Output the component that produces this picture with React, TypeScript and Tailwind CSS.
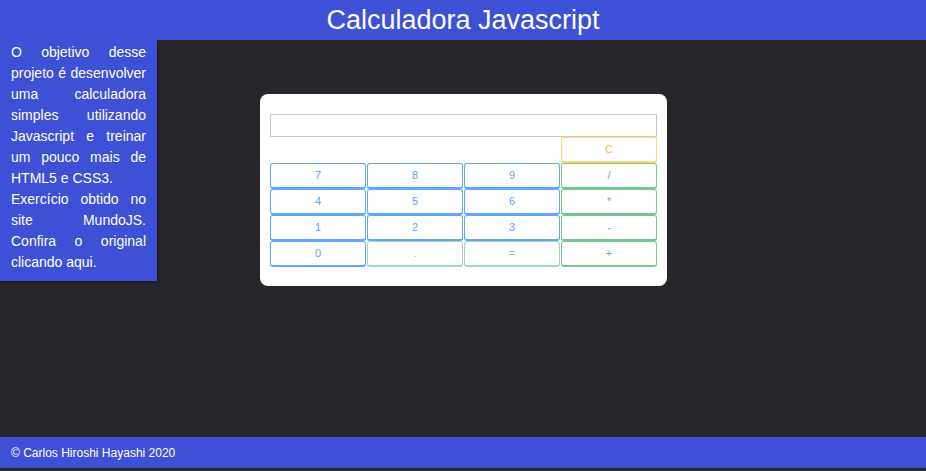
import React from 'react'

type Key = { label: string; tone: 'blue' | 'green' | 'soft' | 'yellow' | 'none' }

const rows: Key[][] = [
  [
    { label: '', tone: 'none' },
    { label: '', tone: 'none' },
    { label: '', tone: 'none' },
    { label: 'C', tone: 'yellow' },
  ],
  [
    { label: '7', tone: 'blue' },
    { label: '8', tone: 'blue' },
    { label: '9', tone: 'blue' },
    { label: '/', tone: 'green' },
  ],
  [
    { label: '4', tone: 'blue' },
    { label: '5', tone: 'blue' },
    { label: '6', tone: 'blue' },
    { label: '*', tone: 'green' },
  ],
  [
    { label: '1', tone: 'blue' },
    { label: '2', tone: 'blue' },
    { label: '3', tone: 'blue' },
    { label: '-', tone: 'green' },
  ],
  [
    { label: '0', tone: 'blue' },
    { label: '.', tone: 'soft' },
    { label: '=', tone: 'soft' },
    { label: '+', tone: 'green' },
  ],
]

const toneClass = {
  blue: 'border-[#5ea6ff] text-[#5e9ff7]',
  green: 'border-[#74c98a] text-[#5dbb74]',
  soft: 'border-[#a3dbb1] text-[#8ccf9c]',
  yellow: 'border-[#ffd873] text-[#f8bb4e]',
  none: 'border-transparent',
}

function CalcKey({ k }: { k: Key }) {
  if (k.tone === 'none') return <div />
  return (
    <button
      className={`flex h-[26px] items-center justify-center rounded-[3px] border border-b-2 bg-white text-[11px] ${toneClass[k.tone]}`}
    >
      {k.label}
    </button>
  )
}

export default function App() {
  return (
    <div className="flex min-h-[471px] flex-col bg-[#28262b] font-['Liberation_Sans',Arial,sans-serif]">
      <header className="flex h-10 items-center justify-center bg-[#3c51d6] pt-px">
        <h1 className="text-[27px] leading-none text-white">Calculadora Javascript</h1>
      </header>

      <div className="flex h-[397px] items-start">
        <aside className="w-[157px] bg-[#3c51d6] px-[11px] pt-[2px] pb-[8px] text-justify text-[14px] leading-[21px] text-white shadow-[1px_1px_2px_rgba(0,0,0,0.4)]">
          <p>
            O objetivo desse projeto é desenvolver uma calculadora simples utilizando Javascript e treinar um pouco mais
            de HTML5 e CSS3.
          </p>
          <p>Exercício obtido no site MundoJS. Confira o original clicando aqui.</p>
        </aside>

        <main className="pl-[103px] pt-[54px]">
          <div className="w-[407px] rounded-[8px] bg-white px-[10px] pt-5 pb-[19px]">
            <input
              type="text"
              readOnly
              className="block h-[23px] w-full border border-[#c9c9c9] bg-white outline-none"
            />
            <div className="grid grid-cols-4 gap-x-px">
              {rows.flat().map((k, i) => (
                <CalcKey key={i} k={k} />
              ))}
            </div>
          </div>
        </main>
      </div>

      <footer className="flex h-[31px] items-center bg-[#3c51d6] px-[11px] text-[12px] text-white">
        © Carlos Hiroshi Hayashi 2020
      </footer>
    </div>
  )
}
